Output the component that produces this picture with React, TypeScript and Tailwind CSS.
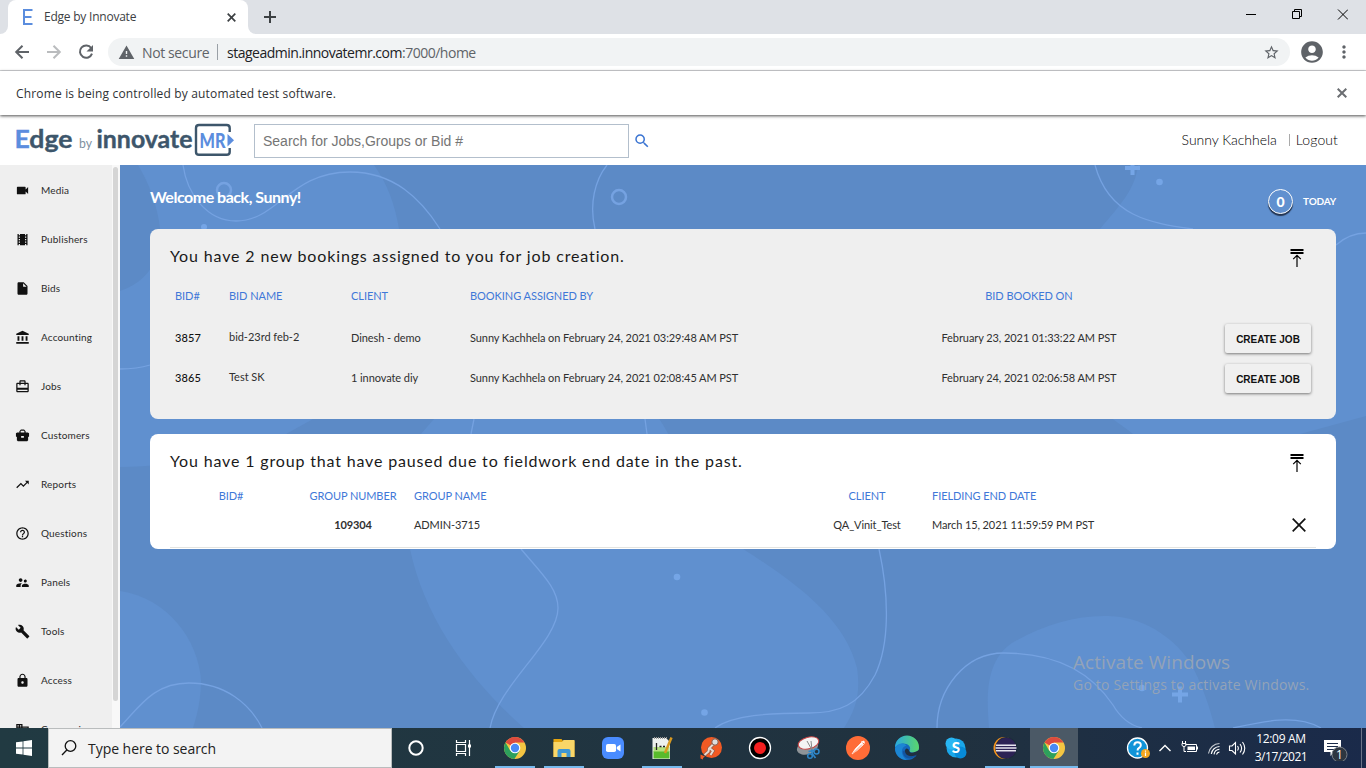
import React from "react";
import {
  MdVideocam, MdTheaters, MdInsertDriveFile, MdAccountBalance, MdCardTravel,
  MdTrendingUp, MdHelpOutline, MdSupervisorAccount, MdBuild, MdLock, MdDomain,
  MdSearch, MdWarning, MdStarBorder, MdAccountCircle, MdMoreVert,
} from "react-icons/md";

const UI = "font-['Open_Sans','Noto_Sans',sans-serif]";

function Cross({ size, stroke, className }: { size: number; stroke: number; className: string }) {
  return (
    <svg width={size} height={size} viewBox={`0 0 ${size} ${size}`} className={className} fill="none" stroke="currentColor" strokeWidth={stroke}>
      <path d={`M.7 .7L${size - 0.7} ${size - 0.7}M${size - 0.7} .7L.7 ${size - 0.7}`} />
    </svg>
  );
}

function TabStrip() {
  return (
    <div className="flex h-[34px] shrink-0 bg-[#dee1e6]">
      <div className="flex w-2 items-end bg-white">
        <div className="h-full w-full rounded-br-lg bg-[#dee1e6]" />
      </div>
      <div className="flex h-full w-[240px] items-center rounded-t-lg bg-white">
        <svg width="11" height="16" viewBox="0 0 11 16" className="ml-[14px] text-[#5b8dde]" fill="none" stroke="currentColor" strokeWidth="2">
          <path d="M10.500 1H2v14h8.500M2 8h7.500" />
        </svg>
        <span className={`${UI} ml-[11px] w-[183px] whitespace-nowrap text-[12px] leading-4 tracking-[-0.23px] text-[#3c4043]`}>Edge by Innovate</span>
        <Cross size={9} stroke={1.7} className="text-[#3c4043]" />
      </div>
      <div className="flex w-2 items-end bg-white">
        <div className="h-full w-full rounded-bl-lg bg-[#dee1e6]" />
      </div>
      <svg width="12" height="12" viewBox="0 0 12 12" className="mt-[11px] ml-[8px] text-[#3c4043]" stroke="currentColor" strokeWidth="2">
        <path d="M6 0v12M0 6h12" />
      </svg>
      <div className="ml-auto flex pt-[9px] pr-[18px] text-black">
        <svg width="103" height="12" viewBox="0 0 103 12" fill="none" stroke="currentColor" strokeWidth="1">
          <path d="M1 5.500h10" />
          <path d="M47.500 2.500h7v7h-7zM49.500 2.500v-2h7v7h-2" />
          <path d="M93 .5l10 10M103 .5l-10 10" />
        </svg>
      </div>
    </div>
  );
}

function Toolbar() {
  return (
    <div className="flex h-[37px] shrink-0 items-center border-b border-[#d5d7da] bg-white text-[#5f6368]">
      <svg width="84" height="20" viewBox="12 42 84 20" className="ml-3" fill="none" stroke="currentColor" strokeWidth="2">
        <path d="M29 52H16.500M22.500 45.700L16.200 52l6.300 6.300" />
        <path d="M47 52h12.500M53.500 45.700l6.300 6.300-6.300 6.300" stroke="#babcbe" />
        <path d="M91.200 48A6.200 6.200 0 1 0 92 53.700" />
        <path d="M93 45v6.500h-6.500z" fill="currentColor" stroke="none" />
      </svg>
      <div className="ml-[12px] flex h-7 w-[1182px] items-center rounded-full bg-[#f1f3f4]">
        <MdWarning size={17} className="ml-[10px]" />
        <span className={`${UI} ml-[7px] w-[75px] text-[14px] whitespace-nowrap tracking-[-0.38px]`}>Not secure</span>
        <span className="h-4 w-px bg-[#9aa0a6]" />
        <span className={`${UI} ml-[9px] text-[14px] whitespace-nowrap tracking-[-0.49px]`}>
          <span className="text-[#202124]">stageadmin.innovatemr.com</span>:7000/home
        </span>
        <MdStarBorder size={17} className="mr-[10px] ml-auto" />
      </div>
      <MdAccountCircle size={26} className="ml-[9px]" />
      <MdMoreVert size={20} className="ml-[9px]" />
    </div>
  );
}

function InfoBar() {
  return (
    <div className="relative z-10 flex h-[44px] shrink-0 items-center justify-between bg-white pr-[19px] pl-4 shadow-[0_1px_3px_rgba(0,0,0,0.7)]">
      <span className={`${UI} pt-[2px] text-[12px] tracking-[0.16px] text-[#303235]`}>Chrome is being controlled by automated test software.</span>
      <Cross size={10} stroke={2} className="text-[#6b6e72]" />
    </div>
  );
}

function Logo() {
  return (
    <svg width="222" height="40" viewBox="0 0 222 40" className="ml-[14px]">
      <g fontFamily="Lato, sans-serif" fontWeight="700" fill="#3d566b" stroke="#3d566b" strokeWidth="0.4">
        <text x="0.500" y="28" fontSize="25" textLength="58" lengthAdjust="spacingAndGlyphs"><tspan fill="#5b8dde" stroke="#5b8dde">E</tspan>dge</text>
        <text x="65" y="28" fontSize="14" fontWeight="400" fill="#8090a0" stroke="none" textLength="13" lengthAdjust="spacingAndGlyphs">by</text>
        <text x="82.500" y="28" fontSize="25" textLength="96" lengthAdjust="spacingAndGlyphs">innovate</text>
        <text x="185.500" y="27.500" fontSize="20" fontWeight="900" fill="#5b8dde" stroke="none" textLength="26" lengthAdjust="spacingAndGlyphs">MR</text>
      </g>
      <path d="M215.700 12V8q0-3-3-3H185q-3 0-3 3v24q0 2.800 3 2.800h27.700q3 0 3-2.800v-4" fill="none" stroke="#3d566b" strokeWidth="2.400" />
      <path d="M213.500 14l6.500 6.200-6.500 6.200z" fill="#5b8dde" />
    </svg>
  );
}

function Header() {
  return (
    <div className="flex h-[50px] shrink-0 items-center bg-white font-[Lato,sans-serif]">
      <Logo />
      <div className="mt-[2px] ml-[18px] flex h-[34px] w-[375px] items-center border border-[#b3bfcc] pl-2 font-['Liberation_Sans',sans-serif] text-[14px] tracking-[0px] text-[#757575]">
        Search for Jobs,Groups or Bid #
      </div>
      <MdSearch size={18} className="mt-[2px] ml-[4px] text-[#3a74d2]" />
      <div className="ml-auto flex items-center pr-7 pb-px text-[14px] font-light text-black">
        <span className="tracking-[-0.02px]">Sunny Kachhela</span>
        <span className="mr-[6px] ml-[12px] h-3 w-px bg-[#aaa]" />
        <span className="tracking-[0.1px]">Logout</span>
      </div>
    </div>
  );
}

function CaseIcon({ size, className }: { size?: number; className?: string }) {
  return (
    <svg width={size} height={size} viewBox="0 0 24 24" className={className} fill="currentColor">
      <path fillRule="evenodd" d="M9.500 2.500h5L17 5v2h3.500L22.500 8.500V13.500L21 14.500v5L19.500 21H4.500L3 19.500v-5L1.500 13.500V8.500L3.500 7H7V5zM9 5v2h6V5l-.8-.6H9.800zM9.800 12.800v2.800h4.400v-2.800z" />
    </svg>
  );
}

const NAV = [
  { label: "Media", icon: MdVideocam },
  { label: "Publishers", icon: MdTheaters },
  { label: "Bids", icon: MdInsertDriveFile },
  { label: "Accounting", icon: MdAccountBalance },
  { label: "Jobs", icon: MdCardTravel },
  { label: "Customers", icon: CaseIcon },
  { label: "Reports", icon: MdTrendingUp },
  { label: "Questions", icon: MdHelpOutline },
  { label: "Panels", icon: MdSupervisorAccount },
  { label: "Tools", icon: MdBuild },
  { label: "Access", icon: MdLock },
  { label: "Companies", icon: MdDomain },
];

function Sidebar() {
  return (
    <nav className="flex w-[120px] shrink-0 overflow-hidden bg-[#efefef]">
      <ul className="w-[112px] shrink-0 pt-px">
        {NAV.map(({ label, icon: Icon }) => (
          <li key={label} className="flex h-[49px] items-center pl-[15px]">
            <Icon size={15} className="shrink-0 text-[#111]" />
            <span className="ml-[11px] font-[Lato,sans-serif] text-[10px] tracking-[0.16px] text-[#2b2b2b]">{label}</span>
          </li>
        ))}
      </ul>
      <div className="flex w-2 shrink-0 bg-[#f8f8f8] pt-[2px] pl-px">
        <div className="h-[534px] w-[5px] rounded-full bg-[#d5d5d5]" />
      </div>
    </nav>
  );
}

function Backdrop() {
  return (
    <svg viewBox="120 165 1246 563" width="1246" height="563" className="absolute inset-0 -z-10">
      <rect x="120" y="165" width="1246" height="563" fill="#6090cf" />
      <g fill="#5c8ac6">
        <path d="M120 165H138C150 185 157 205 160 228C164 260 145 283 120 291Z" />
        <path d="M120 467C200 465 250 450 286 434L313 419H434L421 434C402 470 402 510 410 549C425 620 470 680 524 728H120Z" />
        <path d="M374 165C388 185 395 205 399 229C405 290 520 330 620 380C690 425 680 510 743 549C800 585 845 620 857 668C861 695 855 710 844 728H1366V416L1300 434H1133C1110 415 1060 390 1050 340C1045 280 1080 260 1100 229C1120 205 1135 190 1138 165Z" />
      </g>
      <g fill="#6090cf">
        <path d="M120 591C168 598 198 640 201 680C201 700 197 715 193 728H120Z" />
        <path d="M989 728C987 700 984 662 1012 643C1044 624 1078 615 1108 616C1150 617 1178 644 1190 662C1202 684 1209 705 1215 728Z" />
      </g>
      <g fill="none" stroke="#75a2e1" strokeWidth="1.300">
        <path d="M183 165C187 194 207 221 236 221C278 221 290 172 350 172C394 172 421 199 440 229" />
        <path d="M607 165C595 180 589 204 595 229M474 419L471 434M645 419L647 434M120 369Q137 369 150 365" />
        <path d="M120 727C140 706 154 683 189 683C225 683 250 704 262 728" />
        <path d="M521 549C541 573 558 588 558 608C558 642 498 685 490 728" />
        <path d="M879 549C889 595 890 644 875 675C859 705 839 713 809 713C769 713 733 715 715 728" />
        <path d="M937 728C937 690 964 653 1004 653C1056 653 1091 672 1113 705Q1124 724 1142 728" />
        <path d="M1233 728C1264 721 1296 714 1321 728M1095 165C1109 217 1151 223 1193 229M1336 245C1344 238 1354 233 1366 233" />
      </g>
      <g fill="none" stroke="#75a2e1" strokeWidth="2.500">
        <circle cx="224" cy="190" r="7" />
        <circle cx="619" cy="197" r="7" />
      </g>
      <g fill="#75a5e6">
        <circle cx="204" cy="227" r="3" />
        <circle cx="677" cy="577" r="3.300" />
        <circle cx="704.500" cy="712.500" r="3.300" />
        <circle cx="1142" cy="688" r="3.300" />
        <circle cx="1159.500" cy="182" r="3.300" />
      </g>
      <path d="M1172 694.500h16M1180 686.500v16M1125 168h15M1132.500 160v15" stroke="#75a5e6" strokeWidth="4" />
    </svg>
  );
}

function CollapseIcon() {
  return (
    <svg width="14" height="18" viewBox="0 0 14 18" className="mt-[2px] mr-[12px]" fill="none" stroke="#000">
      <path d="M.5 1h13M.5 4h13" strokeWidth="2" />
      <path d="M7 18V7M3.200 10.200L7 6.400l3.800 3.800" strokeWidth="1.200" />
    </svg>
  );
}

const BOOKINGS = [
  { id: "3857", name: "bid-23rd feb-2", client: "Dinesh - demo", by: "Sunny Kachhela on February 24, 2021 03:29:48 AM PST", on: "February 23, 2021 01:33:22 AM PST" },
  { id: "3865", name: "Test SK", client: "1 innovate diy", by: "Sunny Kachhela on February 24, 2021 02:08:45 AM PST", on: "February 24, 2021 02:06:58 AM PST" },
];

const BOOK_COLS = "grid grid-cols-[59px_122px_119px_460px_198px_183px] items-center";
const GROUP_COLS = "grid grid-cols-[122px_122px_406px_94px_18px_348px_36px] items-center";

function Bookings() {
  return (
    <section className="h-[190px] rounded-lg bg-[#efefef] pt-[18px] pl-5">
      <div className="flex h-[20px] items-start justify-between pr-5">
        <h2 className="-mt-px text-[16px] leading-5 tracking-[0.86px] text-[#1a1a1a]">You have 2 new bookings assigned to you for job creation.</h2>
        <CollapseIcon />
      </div>
      <div className={`${BOOK_COLS} mt-[21px] h-4 text-[11px] tracking-[-0.05px] text-[#3f78d8]`}>
        <span className="pl-[5px]">BID#</span>
        <span>BID NAME</span>
        <span>CLIENT</span>
        <span>BOOKING ASSIGNED BY</span>
        <span className="text-center">BID BOOKED ON</span>
      </div>
      <div className="mt-[14px]">
        {BOOKINGS.map((b) => (
          <div key={b.id} className={`${BOOK_COLS} h-10 text-[11px] tracking-[-0.08px] text-[#303030]`}>
            <span className="pl-[5px] font-medium tracking-[0.1px] text-[#111]">{b.id}</span>
            <span className="pb-[2px] tracking-[-0.03px]">{b.name}</span>
            <span>{b.client}</span>
            <span>{b.by}</span>
            <span className="text-center">{b.on}</span>
            <button className="ml-auto h-[29px] w-[86px] rounded-[2px] bg-[#f0f0f0] pt-[2px] font-['Liberation_Sans',sans-serif] text-[10px] font-bold tracking-[0px] text-[#111] shadow-[0_1px_3px_rgba(0,0,0,0.5)]">
              CREATE JOB
            </button>
          </div>
        ))}
      </div>
    </section>
  );
}

function Groups() {
  return (
    <section className="mt-[15px] h-[115px] rounded-lg bg-white pt-[18px] pl-5">
      <div className="flex h-[20px] items-start justify-between pr-5">
        <h2 className="-mt-px text-[16px] leading-5 tracking-[0.84px] text-[#1a1a1a]">You have 1 group that have paused due to fieldwork end date in the past.</h2>
        <CollapseIcon />
      </div>
      <div className={`${GROUP_COLS} mt-[16px] h-4 text-[11px] tracking-[-0.08px] text-[#3f78d8]`}>
        <span className="text-center">BID#</span>
        <span className="text-center">GROUP NUMBER</span>
        <span>GROUP NAME</span>
        <span className="text-center">CLIENT</span>
        <span />
        <span>FIELDING END DATE</span>
      </div>
      <div className={`${GROUP_COLS} mr-5 h-[44px] border-b border-[#e4e4e0] text-[11px] tracking-[-0.1px] text-[#303030]`}>
        <span />
        <span className="text-center font-bold">109304</span>
        <span>ADMIN-3715</span>
        <span className="text-center">QA_Vinit_Test</span>
        <span />
        <span>March 15, 2021 11:59:59 PM PST</span>
        <Cross size={14} stroke={1.7} className="mb-px ml-[12px] text-[#111]" />
      </div>
    </section>
  );
}

function Main() {
  return (
    <main className="relative isolate flex-1 px-[30px] font-[Lato,sans-serif]">
      <Backdrop />
      <div className="flex h-16 items-center justify-between text-white">
        <h1 className="text-[16px] font-bold tracking-[-0.48px]">Welcome back, Sunny!</h1>
        <div className="flex items-center pt-[9px]">
          <span className="flex size-[25px] items-center justify-center rounded-full border border-white bg-[#6090cf] text-[14px] font-black shadow-[0_2px_1px_rgba(20,30,50,0.8)]">0</span>
          <span className="ml-[10px] text-[10px] font-bold tracking-[-0.2px]">TODAY</span>
        </div>
      </div>
      <Bookings />
      <Groups />
      <div className={`${UI} absolute top-[484px] left-[953px] whitespace-nowrap text-[#93a3b8]`}>
        <p className="text-[19px] leading-[26px] tracking-[0.07px]">Activate Windows</p>
        <p className="text-[14px] leading-[20px] tracking-[0.2px]">Go to Settings to activate Windows.</p>
      </div>
    </main>
  );
}

function Chrome() {
  return (
    <svg width="24" height="24" viewBox="0 0 24 24">
      <circle cx="12" cy="12" r="11" fill="#f4c542" />
      <path d="M12 12L2.500 6.500A11 11 0 0 1 21.500 6.500H12Z" fill="#dd4b3e" />
      <path d="M2.500 6.500L7.200 14.700 12 12 16.700 14.800 11.400 23A11 11 0 0 1 2.500 6.500Z" fill="#2da05c" />
      <circle cx="12" cy="12" r="5.300" fill="#fff" />
      <circle cx="12" cy="12" r="4.200" fill="#4a8af4" />
    </svg>
  );
}

function Folder() {
  return (
    <svg width="24" height="24" viewBox="0 0 24 24">
      <path d="M1.500 3h8l1.500 2H22.500v16H1.500z" fill="#e5a50f" />
      <path d="M1.500 6l8.500 0 1.500-2H22.500v17H1.500z" fill="#f9d668" />
      <path d="M5.500 21v-6q0-2 2-2h9q2 0 2 2v6h-4v-4h-5v4z" fill="#3f97d3" />
    </svg>
  );
}

function ZoomApp() {
  return (
    <svg width="24" height="24" viewBox="0 0 24 24">
      <rect x="1" y="1" width="22" height="22" rx="6" fill="#4a8cff" />
      <rect x="5" y="8" width="10" height="8" rx="1.800" fill="#fff" />
      <path d="M15.800 11L19.500 8.500v7L15.800 13z" fill="#fff" />
    </svg>
  );
}

function Notes() {
  return (
    <svg width="24" height="24" viewBox="0 0 24 24">
      <path d="M2.500 2H16l4 4v17H2.500z" fill="#eef1ee" />
      <path d="M3.500 15H19.500v7.500H3.500z" fill="#58bb2c" />
      <path d="M3.500 11H19.500v4.500H3.500z" fill="#b4e07e" />
      <path d="M6.500 7v7M9.500 10.500h2M13 10.500h2" stroke="#222" strokeWidth="1.300" />
      <path d="M4 2h14" stroke="#999" strokeDasharray="1 1" strokeWidth="2" />
      <path d="M21.500 1.500L15 17" stroke="#d99a20" strokeWidth="2.500" />
    </svg>
  );
}

function Courier() {
  return (
    <svg width="24" height="24" viewBox="0 0 24 24">
      <circle cx="12.500" cy="11.500" r="10.500" fill="#f15a24" />
      <path d="M1.500 18.500l4.500 2-2 1.500 0 1.500-2.500-1z" fill="#f15a24" />
      <path d="M14.500 8L10 12.500l-.5 3-4 3.500M11 12.500l3 2.500-2.500 4" stroke="#8a5a48" strokeWidth="3.200" fill="none" />
      <path d="M14.500 8L10 12.500l-.5 3-4 3.500M11 12.500l3 2.500-2.500 4" stroke="#eadbd2" strokeWidth="2" fill="none" />
      <circle cx="16" cy="6" r="3.200" fill="#ddd" stroke="#8a5a48" />
    </svg>
  );
}

function Recorder() {
  return (
    <svg width="24" height="24" viewBox="0 0 24 24">
      <circle cx="12" cy="12" r="10.500" fill="#000" stroke="#fff" strokeWidth="1.300" />
      <circle cx="12" cy="12" r="6" fill="#f51f1f" />
    </svg>
  );
}

function Snip() {
  return (
    <svg width="26" height="24" viewBox="0 0 26 24">
      <ellipse cx="11.500" cy="11" rx="11" ry="7" transform="rotate(-20 12 11)" fill="#8f9498" />
      <ellipse cx="12.500" cy="7" rx="10.500" ry="5.800" transform="rotate(-15 12.500 7)" fill="#f4f4f4" stroke="#c84444" />
      <path d="M11 5l5 9M15 5l1 9" stroke="#888" />
      <circle cx="14" cy="20" r="2.300" stroke="#2d85c8" strokeWidth="1.500" fill="none" />
      <circle cx="20.500" cy="15.500" r="2.500" stroke="#2d85c8" strokeWidth="1.500" fill="none" />
      <path d="M15.500 13.500l1 4.500 3 4M12.500 15.500l6-1" stroke="#2d85c8" strokeWidth="1.700" fill="none" />
    </svg>
  );
}

function Postman() {
  return (
    <svg width="26" height="26" viewBox="0 0 26 26">
      <circle cx="13" cy="13" r="12" fill="#ff6c37" />
      <path d="M7 19l3.500-5.500 6-6 2 2-6.500 6zM16 7l3-1 .5 2.500" fill="#fff" stroke="#fff" strokeWidth=".7" />
      <path d="M8 18.500L17 9.500" stroke="#ff6c37" strokeWidth=".7" />
    </svg>
  );
}

function Edge() {
  return (
    <svg width="26" height="26" viewBox="0 0 26 26">
      <defs>
        <linearGradient id="edgeTop" x1="0" x2="1">
          <stop offset="0" stopColor="#2aa9e0" />
          <stop offset="1" stopColor="#5bd66b" />
        </linearGradient>
      </defs>
      <circle cx="13" cy="13" r="12" fill="#1469bd" />
      <path d="M1 12.500A12 12 0 0 1 25 12.500C25 17 20.500 18 17 17.200c-2-.5-1.500-1.300-1-2.500C17 11 13 8 8.500 8.500 4.500 9 2 11 1 12.500Z" fill="url(#edgeTop)" />
      <path d="M15.500 16.500q1.500 3.200 9.500-1.500l1 3-3 2.500q-9 3.500-12-2-.8-4 1.500-5 2-.5 3 3z" fill="#203040" />
      <path d="M11 15.500c-.5 5 6 7.500 12 4C17 27 8 23 9 16Z" fill="#1355a0" />
      <path d="M1 13.500C3 7.500 10 7.500 12.500 10.500 6 12 6.500 21 13 25 5 25 1 19 1 13.500Z" fill="#1c86d4" />
    </svg>
  );
}

function Skype() {
  return (
    <svg width="24" height="24" viewBox="0 0 24 24">
      <circle cx="12" cy="12" r="9.500" fill="#1aa7ea" />
      <circle cx="7.500" cy="7.500" r="6" fill="#28b6f3" />
      <circle cx="16.500" cy="16.500" r="6" fill="#078bd8" />
      <text x="12" y="17.300" textAnchor="middle" fontFamily="Lato, sans-serif" fontWeight="900" fontSize="15" fill="#fff">S</text>
    </svg>
  );
}

function Eclipse() {
  return (
    <svg width="26" height="24" viewBox="0 0 26 24">
      <circle cx="12.500" cy="12" r="11" fill="#f7941e" />
      <circle cx="14.300" cy="12" r="11" fill="#1d2c3c" />
      <circle cx="14" cy="12" r="10.300" fill="#2c2255" />
      <path d="M4 9.200h20M3.500 12h21M4 14.800h20" stroke="#e8e6f0" strokeWidth="1.600" />
    </svg>
  );
}

const APPS = [
  { key: "chrome", icon: Chrome, open: true },
  { key: "folder", icon: Folder, open: true },
  { key: "zoom", icon: ZoomApp, open: false },
  { key: "notes", icon: Notes, open: true },
  { key: "courier", icon: Courier, open: false },
  { key: "recorder", icon: Recorder, open: false },
  { key: "snip", icon: Snip, open: false },
  { key: "postman", icon: Postman, open: false },
  { key: "edge", icon: Edge, open: false },
  { key: "skype", icon: Skype, open: false },
  { key: "eclipse", icon: Eclipse, open: true },
];

function Tray() {
  return (
    <div className="ml-auto flex h-full items-center text-white">
      <svg width="122" height="26" viewBox="1125 735 122 26" fill="none" stroke="#fff">
        <circle cx="1137.500" cy="748" r="10" fill="#1094d8" strokeWidth="1.300" />
        <path d="M1134.300 745.500q0-3.300 3.300-3.300t3.200 3q0 1.700-1.700 2.700t-1.500 2.600M1137.500 752.500v2.200" strokeWidth="2" />
        <circle cx="1145.500" cy="753.500" r="4.500" fill="#f4a720" stroke="none" />
        <path d="M1145.500 752.500v3.500M1145.500 750.500v1.200" strokeWidth="1.200" />
        <path d="M1159.500 751l5.500-5.500 5.500 5.500" strokeWidth="1.400" />
        <path d="M1185.500 744.500h11v7h-9.500M1197.500 746.500v3" />
        <path d="M1187.500 746.500h7.500v3.500h-7.500z" fill="#fff" stroke="none" />
        <path d="M1182 743.500h4v2q-2 2.500-4 0zM1182.500 743v-2M1185.500 743v-2M1184 747v4.500h2" />
        <g strokeWidth="1.100">
          <path d="M1208.500 753.500a11.500 11.500 0 0 1 11-10" opacity=".75" />
          <path d="M1211.300 754a8.500 8.500 0 0 1 8.200-7.500M1214 754.300a6 6 0 0 1 5.500-5M1216.500 754.500a3.500 3.500 0 0 1 3-2.500" />
        </g>
        <path d="M1229.500 746v4.500h2.500l3.500 3.500v-11.500l-3.500 3.500zM1237.500 746q1.700 2.200 0 4.500M1240 744q3.200 4.200 0 8.500M1242.500 742q4.500 6.200 0 12.500" strokeWidth="1.100" />
      </svg>
      <div className={`${UI} w-[68px] pb-px text-center text-[12px] leading-[18px]`}>
        <p className="tracking-[-0.3px]">12:09 AM</p>
        <p className="tracking-[-0.48px]">3/17/2021</p>
      </div>
      <svg width="46" height="26" viewBox="1316 735 46 26">
        <path d="M1325 740h17v12h-6.500l-4 4v-4H1325z" fill="#fff" />
        <path d="M1328 743.500h11M1328 746.500h11M1328 749.500h7" stroke="#1b2c4a" />
        <circle cx="1340.500" cy="754.500" r="7.500" fill="#2e3640" stroke="#7a8088" strokeWidth="1" />
        <text x="1340.500" y="759" textAnchor="middle" fontSize="12" fill="#fff" fontFamily="Open Sans, sans-serif">1</text>
      </svg>
    </div>
  );
}

function Taskbar() {
  return (
    <div className="flex h-10 shrink-0 bg-linear-to-r from-[#213a42] via-[#20313f] via-70% to-[#1a2a4a]">
      <div className="flex w-12 items-center justify-center">
        <svg width="16" height="16" viewBox="0 0 16 16" fill="#fff">
          <path d="M0 2.300L6.600 1.400V7.600H0zM7.400 1.300L16 0V7.600H7.400zM0 8.400H6.600V14.600L0 13.700zM7.400 8.400H16V16L7.400 14.700z" />
        </svg>
      </div>
      <div className="flex w-[344px] items-center border border-[#b9bcbd] bg-[#f3f3f3] pl-[11px]">
        <svg width="18" height="18" viewBox="0 0 18 18" fill="none" stroke="#111" strokeWidth="1.300">
          <circle cx="10.500" cy="7" r="5.300" />
          <path d="M6.800 11L2 16" />
        </svg>
        <span className={`${UI} ml-[10px] text-[14px] tracking-[-0.04px] text-[#222]`}>Type here to search</span>
      </div>
      <div className="flex w-12 items-center justify-center">
        <svg width="18" height="18" viewBox="0 0 18 18">
          <circle cx="9" cy="9" r="6.700" fill="none" stroke="#fff" strokeWidth="2" />
        </svg>
      </div>
      <div className="flex w-12 items-center justify-center">
        <svg width="18" height="16" viewBox="0 0 18 16" fill="none" stroke="#fff" strokeWidth="1.200">
          <path d="M1.500 4.500h9v7h-9zM1.500 0v2.500h9V0M1.500 16v-2.500h9V16M14.500 0v16" />
          <path d="M13 4.500h3v3h-3z" fill="#fff" stroke="none" />
        </svg>
      </div>
      <div className="ml-[2px] flex">
        {APPS.map(({ key, icon: Icon, open }) => (
          <div key={key} className="flex w-[49px] flex-col items-center">
            <div className="flex h-[38px] items-center pt-[2px]"><Icon /></div>
            <div className={open ? "h-[2px] w-10 bg-[#76b9ed]" : "h-[2px] w-10"} />
          </div>
        ))}
      </div>
      <div className="ml-[1px] flex w-12 flex-col items-center bg-[#4b5966]">
        <div className="flex h-[38px] items-center pt-[2px]"><Chrome /></div>
        <div className="h-[2px] w-12 bg-[#76b9ed]" />
      </div>
      <Tray />
      <div className="mr-1 w-px bg-[#6a7488]" />
    </div>
  );
}

export default function App() {
  return (
    <div className="flex h-[768px] w-[1366px] flex-col overflow-hidden bg-white">
      <TabStrip />
      <Toolbar />
      <InfoBar />
      <Header />
      <div className="flex h-[563px] shrink-0">
        <Sidebar />
        <Main />
      </div>
      <Taskbar />
    </div>
  );
}
